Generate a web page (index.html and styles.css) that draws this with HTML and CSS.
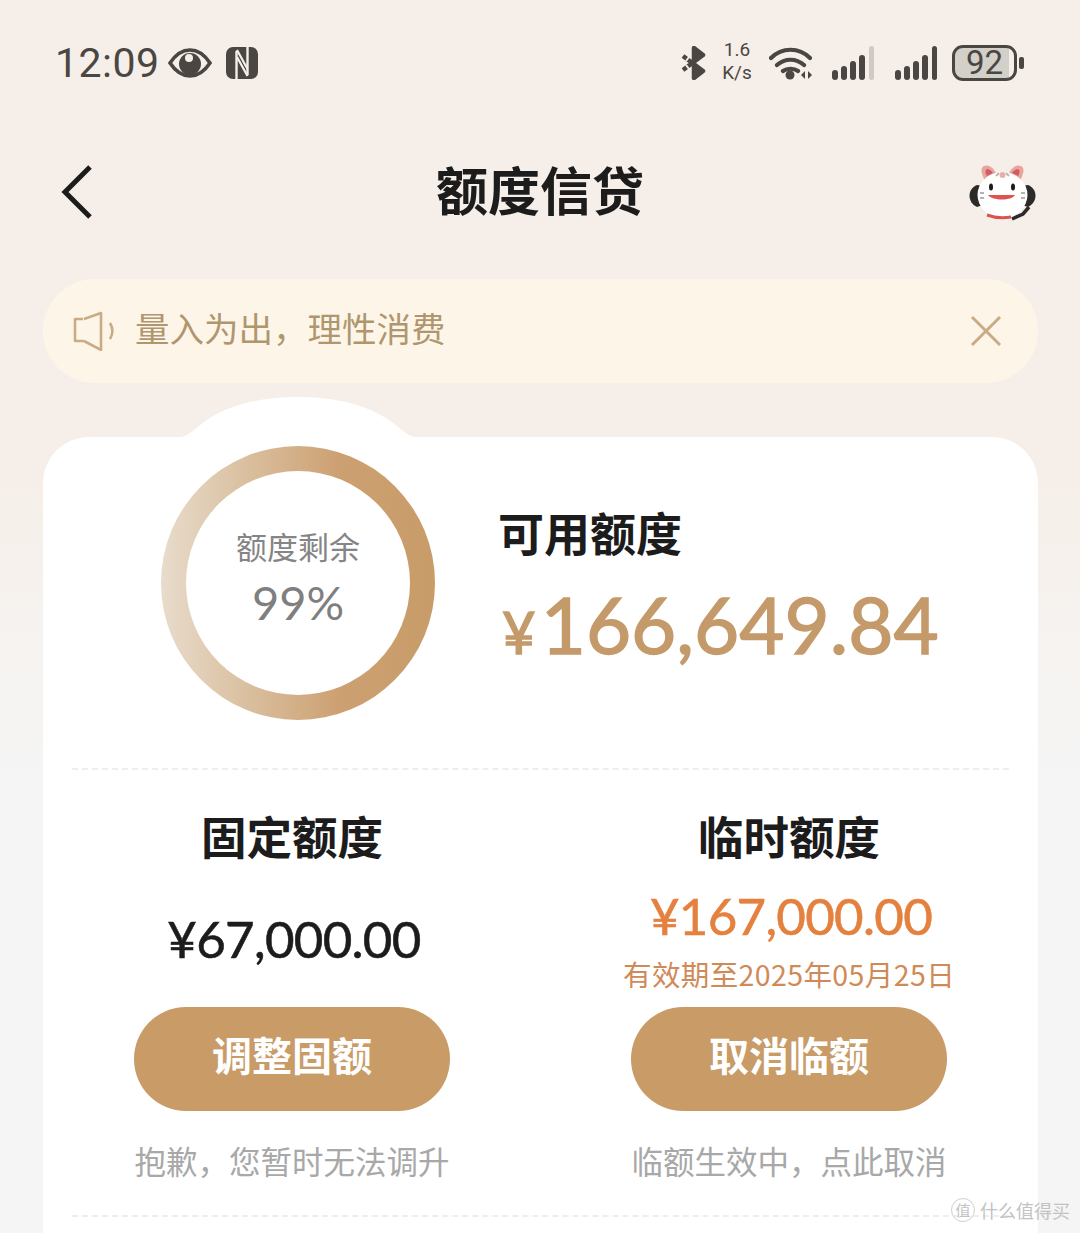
FILE: index.html
```html
<!doctype html>
<html lang="zh-CN">
  <head>
    <meta charset="utf-8">
    <meta name="viewport" content="width=device-width, initial-scale=1">
    <title>额度信贷</title>
    <link rel="stylesheet" href="styles.css">
  </head>
  <body>
    <div class="page">
      <header class="status">
        <div class="status-left">
          <span class="clock">12:09</span>
          <svg class="eye" viewBox="0 0 44 30" width="44" height="30">
            <path d="M2 15C8 6 14 2 22 2s14 4 20 13c-6 9-12 13-20 13S8 24 2 15z" fill="none" stroke="#4a4642" stroke-width="3.6"/>
            <circle cx="22" cy="16" r="11" fill="#4a4642"/>
            <circle cx="21" cy="10" r="4" fill="#f6efe9"/>
          </svg>
          <svg class="nfc" viewBox="0 0 32 32" width="32" height="32">
            <rect x="0" y="0" width="32" height="32" rx="7" fill="#4a4642"/>
            <path d="M10.5 32V4M21.5 28V0" fill="none" stroke="#f6efe9" stroke-width="2.4"/>
            <path d="M11 3l10.500 19M11 10l10.500 19" fill="none" stroke="#f6efe9" stroke-width="2.2"/>
          </svg>
        </div>
        <div class="status-right">
          <svg class="bt" viewBox="0 0 25 34" width="25" height="34">
            <path d="M2 10l20 15-9 7V2l9 7L2 24" fill="none" stroke="#4a4642" stroke-width="4.500" stroke-linejoin="round"/>
            <path d="M13 3l8 6-8 6zM13 19l8 6-8 6z" fill="#4a4642"/>
            <path d="M8 11l-3 4M8 23l-3-4" fill="none" stroke="#f6efe9" stroke-width="2"/>
          </svg>
          <div class="speed"><span>1.6</span><span>K/s</span></div>
          <svg class="wifi" viewBox="0 0 43 34" width="43" height="34">
            <path d="M2 12C13 1 30 1 41 12M8 19c8-7 19-7 27 0M14 25c4-3 11-3 15 0" fill="none" stroke="#4a4642" stroke-width="4.200" stroke-linecap="round"/>
            <circle cx="21" cy="29" r="4.500" fill="#4a4642"/>
            <path d="M32 29l4-4v8zM43 29l-4-4v8z" fill="#4a4642"/>
          </svg>
          <svg class="signal" viewBox="0 0 43 34" width="43" height="34">
            <rect x="0" y="24" width="6" height="10" rx="3" fill="#4a4642"/>
            <rect x="9" y="20" width="6" height="14" rx="3" fill="#4a4642"/>
            <rect x="18" y="15" width="6" height="19" rx="3" fill="#4a4642"/>
            <rect x="27" y="9" width="6" height="25" rx="3" fill="#4a4642"/>
            <rect x="37" y="0" width="5" height="34" rx="2.500" fill="#cfcac5"/>
          </svg>
          <svg class="signal" viewBox="0 0 43 34" width="43" height="34">
            <rect x="0" y="24" width="6" height="10" rx="3" fill="#4a4642"/>
            <rect x="9" y="20" width="6" height="14" rx="3" fill="#4a4642"/>
            <rect x="18" y="15" width="6" height="19" rx="3" fill="#4a4642"/>
            <rect x="27" y="9" width="6" height="25" rx="3" fill="#4a4642"/>
            <rect x="37" y="0" width="5" height="34" rx="2.500" fill="#4a4642"/>
          </svg>
          <div class="battery-wrap">
            <div class="battery">92</div>
            <span class="battery-nub"></span>
          </div>
        </div>
      </header>

      <nav class="navbar">
        <svg class="back" viewBox="0 0 32 54" width="32" height="54">
          <path d="M29 2L4 27l25 25" fill="none" stroke="#1c1c1c" stroke-width="5"/>
        </svg>
        <h1 class="title">额度信贷</h1>
        <svg class="mascot" viewBox="0 0 70 60" width="70" height="60">
          <path d="M9 23c-10 4-10 17 0 22l6-2V24z" fill="#2b2b2b"/>
          <path d="M60 23c10 4 10 17 0 22l-6-2V24z" fill="#2b2b2b"/>
          <path d="M17 19c-4-8-5-13-1-15 4-2 9 1 12 7zM52 19c4-8 5-13 1-15-4-2-9 1-12 7z" fill="#e9a59c"/>
          <path d="M19 14c-2-3-2-6 0-7 2 0 5 2 6 4zM50 14c2-3 2-6 0-7-2 0-5 2-6 4z" fill="#cf5c67"/>
          <ellipse cx="34.500" cy="33" rx="25" ry="23" fill="#fff"/>
          <path d="M28 14l3-3M41 14l-3-3" fill="none" stroke="#bcb6ae" stroke-width="2"/>
          <circle cx="34.500" cy="13" r="3" fill="#e8b1a3"/>
          <ellipse cx="23" cy="25" rx="2" ry="3.500" fill="#1c1c1c"/>
          <ellipse cx="45" cy="25" rx="2" ry="3.500" fill="#1c1c1c"/>
          <path d="M20 33h27c-3 6-23 6-27 0z" fill="#e0524f"/>
          <path d="M12 31h4M12 36h4M53 31h4M53 36h4" fill="none" stroke="#9a9a9a" stroke-width="1.400"/>
          <path d="M19 53c8 3 17 3 24 2" fill="none" stroke="#d9534f" stroke-width="3"/>
          <path d="M44 57l11-5 6-7" fill="none" stroke="#2b2b2b" stroke-width="3.500"/>
        </svg>
      </nav>

      <div class="notice">
        <svg class="speaker" viewBox="0 0 46 40" width="46" height="40">
          <path d="M10 8H2v22h9M11 8l17-6v37L11 30" fill="none" stroke="#c9ab85" stroke-width="2.600" stroke-linejoin="round"/>
          <path d="M37 12c3 5 3 11 0 16" fill="none" stroke="#c9ab85" stroke-width="2.600"/>
        </svg>
        <span class="notice-text">量入为出，理性消费</span>
        <svg class="close" viewBox="0 0 32 32" width="32" height="32">
          <path d="M2 2l28 28M30 2L2 30" fill="none" stroke="#c9ab85" stroke-width="3"/>
        </svg>
      </div>

      <main class="card">
        <section class="summary">
          <div class="ring-wrap">
            <svg class="hump" viewBox="0 0 250 44" width="250" height="44">
              <path d="M0 42c14 0 18-6 26-12C50 10 85 1 125 1s75 9 99 29c8 6 12 12 26 12v2H0z" fill="#fff"/>
            </svg>
            <div class="ring">
              <div class="ring-inner">
                <span class="ring-label">额度剩余</span>
                <span class="ring-value">99%</span>
              </div>
            </div>
          </div>
          <div class="available">
            <div class="available-label">可用额度</div>
            <div class="available-amount"><span class="yen">¥</span>166,649.84</div>
          </div>
        </section>

        <section class="limits">
          <div class="limit">
            <h2 class="limit-title">固定额度</h2>
            <div class="limit-body">
              <div class="limit-amount">¥67,000.00</div>
            </div>
            <button class="limit-btn">调整固额</button>
            <p class="limit-hint">抱歉，您暂时无法调升</p>
          </div>
          <div class="limit">
            <h2 class="limit-title">临时额度</h2>
            <div class="limit-body">
              <div class="limit-amount limit-amount-temp">¥167,000.00</div>
              <div class="limit-expiry">有效期至2025年05月25日</div>
            </div>
            <button class="limit-btn">取消临额</button>
            <p class="limit-hint">临额生效中，点此取消</p>
          </div>
        </section>
      </main>

      <div class="watermark">
        <span class="watermark-badge">值</span>
        <span>什么值得买</span>
      </div>
    </div>
  </body>
</html>
```

FILE: styles.css
```css
* {
  box-sizing: border-box;
}
html, body {
  margin: 0;
  padding: 0;
}
body {
  width: 1080px;
  height: 1233px;
  overflow: hidden;
  font-family: "Noto Sans CJK SC", "Noto Sans", sans-serif;
  color: #1c1c1c;
}
.page {
  position: relative;
  height: 1233px;
  overflow: hidden;
  background: linear-gradient(#f6efe9 0, #f6efe9 480px, #f5f5f5 780px);
}

/* status bar */
.status {
  height: 126px;
  padding: 0 56px 0 55px;
  display: flex;
  justify-content: space-between;
  align-items: center;
  color: #4a4642;
}
.status-left {
  display: flex;
  align-items: center;
}
.clock {
  font-family: Roboto, sans-serif;
  font-size: 41px;
  width: 113px;
  letter-spacing: 0.5px;
}
.nfc {
  margin-left: 14px;
}
.status-right {
  display: flex;
  align-items: center;
}
.speed {
  display: flex;
  flex-direction: column;
  align-items: center;
  width: 34px;
  margin: -4px 15px 0 14px;
  font-family: Roboto, sans-serif;
  font-size: 19px;
  line-height: 23px;
}
.signal {
  margin-left: 20px;
}
.battery-wrap {
  display: flex;
  align-items: center;
  margin-left: 14px;
  gap: 2px;
}
.battery {
  width: 65px;
  height: 36px;
  border: 3.5px solid #4a4642;
  border-radius: 11px;
  background: linear-gradient(90deg, #d3cfc9 92%, transparent 92%);
  text-align: center;
  font-family: Roboto, sans-serif;
  font-size: 33px;
  line-height: 29px;
}
.battery-nub {
  width: 5px;
  height: 12px;
  border-radius: 2px;
  background: #4a4642;
}

/* nav */
.navbar {
  height: 132px;
  padding: 0 42px 0 61px;
  display: grid;
  grid-template-columns: 1fr auto 1fr;
  align-items: center;
}
.mascot {
  justify-self: end;
}
.title {
  margin: 0 0 6px;
  padding-right: 19px;
  font-size: 52px;
  font-weight: 700;
  line-height: 60px;
}

/* notice */
.notice {
  height: 104px;
  margin: 21px 42px 0 43px;
  padding: 0 36px 0 30px;
  display: flex;
  align-items: center;
  background: #fdf6e8;
  border-radius: 52px;
}
.notice-text {
  margin: 0 0 8px 16px;
  flex: 1;
  font-size: 34.5px;
  color: #b0966f;
}

/* card */
.card {
  position: relative;
  height: 900px;
  margin: 54px 42px 0 43px;
  padding: 0 29px;
  background: #fff;
  border-radius: 46px 46px 0 0;
}
.summary {
  height: 333px;
  padding: 9px 0 0 89px;
  display: flex;
  align-items: flex-start;
  border-bottom: 2px dashed #eeeeee;
}
.ring-wrap {
  position: relative;
}
.hump {
  position: absolute;
  left: 12px;
  top: -50px;
}
.ring {
  position: relative;
  width: 274px;
  height: 274px;
  padding: 25px;
  border-radius: 50%;
  background: linear-gradient(90deg, #e8dccc 0, #d8bc9a 35%, #cda072 65%, #c89c68 100%);
}
.ring-inner {
  width: 100%;
  height: 100%;
  border-radius: 50%;
  background: #fff;
  display: flex;
  flex-direction: column;
  align-items: center;
  padding-top: 52px;
}
.ring-label {
  font-size: 31px;
  line-height: 46px;
  color: #858585;
}
.ring-value {
  font-family: Lato, sans-serif;
  font-weight: 400;
  font-size: 47px;
  line-height: 66px;
  color: #7f7f7f;
}
.available {
  margin-left: 63px;
  padding-top: 58px;
}
.available-label {
  font-size: 46px;
  font-weight: 700;
  line-height: 54px;
}
.available-amount {
  margin-top: 18px;
  margin-left: 4px;
  font-family: Lato, sans-serif;
  font-weight: 400;
  font-size: 78px;
  line-height: 96px;
  -webkit-text-stroke: 1.4px currentColor;
  color: #c49a6b;
  white-space: nowrap;
}
.yen {
  font-size: 58px;
  margin-right: 5px;
}

.limits {
  display: flex;
  gap: 181px;
  padding-left: 62px;
  border-bottom: 2px dashed #eeeeee;
  height: 447px;
}
.limit {
  flex: 0 0 316px;
  min-width: 0;
  display: flex;
  flex-direction: column;
  align-items: center;
  padding-top: 34px;
}
.limit-title {
  margin: 0;
  font-size: 45.5px;
  font-weight: 700;
  line-height: 62px;
  white-space: nowrap;
}
.limit-body {
  height: 141px;
  padding-top: 6px;
  display: flex;
  flex-direction: column;
  justify-content: center;
  align-items: center;
  white-space: nowrap;
}
.limit-amount {
  font-family: Lato, sans-serif;
  font-weight: 400;
  font-size: 51px;
  line-height: 60px;
  letter-spacing: -0.7px;
  -webkit-text-stroke: 0.6px currentColor;
  color: #1c1c1c;
  margin: -2px 0 0 4px;
}
.limit-amount-temp {
  color: #e5813f;
  margin-top: 0;
}
.limit-expiry {
  font-size: 28.5px;
  line-height: 40px;
  letter-spacing: 0.4px;
  color: #d08a58;
  margin-top: 8px;
}
.limit-btn {
  flex: none;
  width: 316px;
  height: 104px;
  padding: 0 0 10px;
  border: none;
  border-radius: 52px;
  background: #c89b67;
  color: #fff;
  font-family: inherit;
  font-size: 40px;
  font-weight: 700;
}
.limit-hint {
  margin: 26px 0 0;
  font-size: 31.5px;
  line-height: 46px;
  color: #a8a8a8;
  white-space: nowrap;
}

/* site mark laid over the corner of the shot */
.watermark {
  position: absolute;
  right: 10px;
  bottom: 10px;
  display: flex;
  align-items: center;
  gap: 5px;
  font-size: 18px;
  color: #c2c2c2;
}
.watermark-badge {
  width: 24px;
  height: 24px;
  border: 1px solid #cfcfcf;
  border-radius: 50%;
  text-align: center;
  font-size: 15px;
  line-height: 22px;
}
```
